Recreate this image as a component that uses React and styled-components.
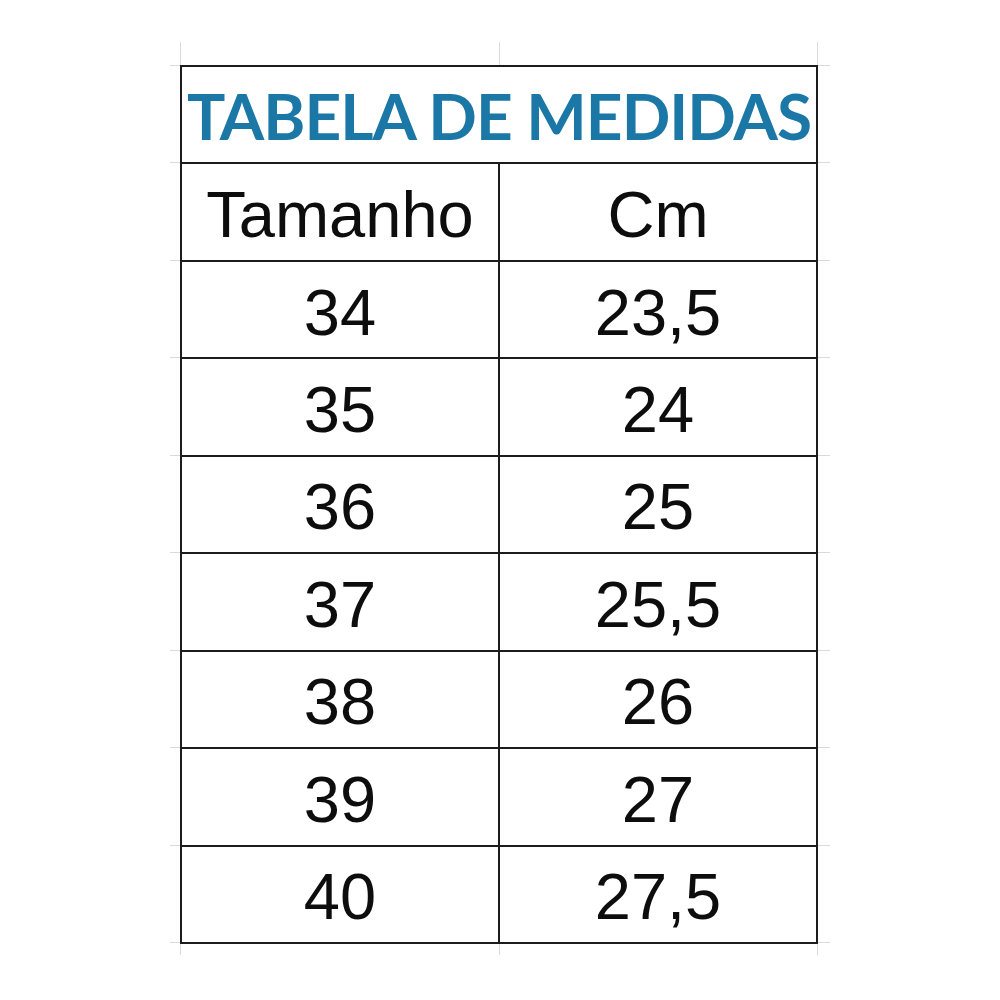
import React from "react";
import styled, { createGlobalStyle } from "styled-components";

const GlobalStyle = createGlobalStyle`
  html, body {
    margin: 0;
    padding: 0;
    background: #ffffff;
  }
`;

const GRID = "#dadada";

const Page = styled.div`
  width: 1000px;
  height: 1000px;
  padding: 42px 0 0 170px;
  box-sizing: border-box;
`;

// faint spreadsheet gridlines that peek out around the table
const Sheet = styled.div`
  width: 660px;
  height: 913px;
  padding: 23px 12px 11px 10px;
  box-sizing: border-box;
  background-image:
    linear-gradient(${GRID}, ${GRID}),
    linear-gradient(${GRID}, ${GRID}),
    linear-gradient(${GRID}, ${GRID}),
    repeating-linear-gradient(
      to bottom,
      transparent 0px,
      transparent 23px,
      ${GRID} 23px,
      ${GRID} 24px,
      transparent 24px,
      transparent 97.44px
    );
  background-size: 1px 100%, 1px 100%, 1px 100%, 100% 100%;
  background-position: 10px 0, 329px 0, 647px 0, 0 0;
  background-repeat: no-repeat;
`;

const Table = styled.div`
  height: 879px;
  display: grid;
  grid-template-columns: minmax(0, 1fr) minmax(0, 1fr);
  grid-template-rows: repeat(9, minmax(0, 1fr));
  gap: 2px;
  border: 2px solid #1c1c1c;
  background: #1c1c1c;
  box-sizing: border-box;
`;

const Cell = styled.div`
  background: #ffffff;
  display: flex;
  align-items: center;
  justify-content: center;
  font-family: "Liberation Sans", Arial, sans-serif;
  font-size: 65px;
  color: #0d0d0d;
  line-height: 1;
  white-space: nowrap;
  padding-top: ${(p) => (p.$header ? "4px" : "5px")};
  box-sizing: border-box;
`;

const TitleCell = styled.div`
  grid-column: 1 / span 2;
  background: #ffffff;
  display: flex;
  align-items: center;
  justify-content: center;
  font-family: Lato, "Open Sans", sans-serif;
  font-weight: 700;
  font-size: 64px;
  letter-spacing: -1px;
  color: #1b78a6;
  line-height: 1;
  white-space: nowrap;
  padding-top: 3px;
  box-sizing: border-box;
`;

const sizes = [
  ["34", "23,5"],
  ["35", "24"],
  ["36", "25"],
  ["37", "25,5"],
  ["38", "26"],
  ["39", "27"],
  ["40", "27,5"],
];

export default function App() {
  return (
    <>
      <GlobalStyle />
      <Page>
        <Sheet>
          <Table>
            <TitleCell>TABELA DE MEDIDAS</TitleCell>
            <Cell $header>Tamanho</Cell>
            <Cell $header>Cm</Cell>
            {sizes.map(([size, cm]) => (
              <React.Fragment key={size}>
                <Cell>{size}</Cell>
                <Cell>{cm}</Cell>
              </React.Fragment>
            ))}
          </Table>
        </Sheet>
      </Page>
    </>
  );
}
